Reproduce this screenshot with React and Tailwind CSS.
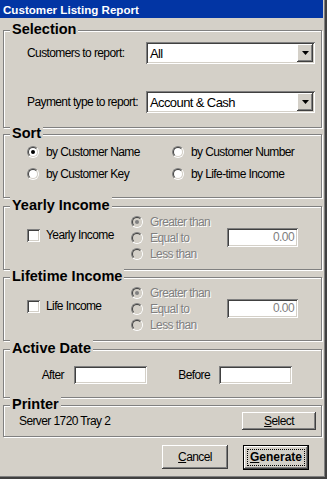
import React from 'react';

const ui = "font-['Liberation_Sans',Arial,sans-serif] text-[12px] tracking-[-0.6px] leading-[15px] text-black whitespace-nowrap";
const raised = "shadow-[inset_-1px_-1px_0_#404040,inset_1px_1px_0_#fff,inset_-2px_-2px_0_#808080,inset_2px_2px_0_#d4d0c8]";
const sunken = "shadow-[inset_1px_1px_0_#808080,inset_-1px_-1px_0_#fff,inset_2px_2px_0_#404040,inset_-2px_-2px_0_#d4d0c8]";
const disabledText = "text-[#808080] [text-shadow:1px_1px_0_#fff]";

function Group({ title, className, children }) {
  return (
    <div className={`relative w-[319px] border border-[#808080] shadow-[inset_1px_1px_0_#fff,1px_1px_0_#fff] ${className}`}>
      <span className="absolute left-[6px] top-[-10px] px-[2px] bg-[#d4d0c8] font-bold text-[14.5px] tracking-normal leading-[17px] text-black">
        {title}
      </span>
      {children}
    </div>
  );
}

function Radio({ checked, disabled }) {
  return (
    <span className="relative block w-[12px] h-[12px] shrink-0 rounded-full border border-t-[#808080] border-l-[#808080] border-b-white border-r-white">
      <span className={`absolute inset-0 rounded-full border border-t-[#404040] border-l-[#404040] border-b-[#d4d0c8] border-r-[#d4d0c8] ${disabled ? 'bg-[#d4d0c8]' : 'bg-white'}`} />
      {checked && (
        <span className={`absolute left-[3px] top-[3px] w-[4px] h-[4px] rounded-full ${disabled ? 'bg-[#808080]' : 'bg-black'}`} />
      )}
    </span>
  );
}

function RadioItem({ label, checked, disabled, className = '' }) {
  return (
    <div className={`flex items-center gap-[7px] ${className}`}>
      <Radio checked={checked} disabled={disabled} />
      <span className={disabled ? disabledText : ''}>{label}</span>
    </div>
  );
}

function Checkbox() {
  return <span className={`block w-[13px] h-[13px] shrink-0 bg-white ${sunken}`} />;
}

function Combo({ value }) {
  return (
    <div className={`flex w-[169px] h-[22px] p-[2px] bg-white ${sunken}`}>
      <span className="flex-1 flex items-center pl-[2px] text-[13px]">{value}</span>
      <span className={`w-[16px] h-[18px] flex items-center justify-center bg-[#d4d0c8] ${raised}`}>
        <svg width="7" height="4" viewBox="0 0 7 4"><path d="M0 0h7L3.5 4z" fill="#000" /></svg>
      </span>
    </div>
  );
}

function IncomeGroup({ title, label, className }) {
  return (
    <Group title={title} className={`h-[64px] ${className}`}>
      <div className="flex pl-[23px]">
        <div className="flex items-center gap-[6px] w-[104px] mt-[22px] h-[13px]">
          <Checkbox />
          <span>{label}</span>
        </div>
        <div className="w-[96px] pt-[7px]">
          <RadioItem className="h-[16px]" label="Greater than" checked disabled />
          <RadioItem className="h-[16px]" label="Equal to" disabled />
          <RadioItem className="h-[16px]" label="Less than" disabled />
        </div>
        <div className={`mt-[21px] w-[71px] h-[19px] bg-white flex items-center justify-end pr-[4px] text-[#808080] ${sunken}`}>
          0.00
        </div>
      </div>
    </Group>
  );
}

export default function App() {
  return (
    <div className={`relative w-[327px] h-[479px] bg-[#d4d0c8] overflow-hidden ${ui} shadow-[inset_-1px_-1px_0_#404040,inset_-2px_-2px_0_#404040,inset_-3px_-3px_0_#808080]`}>
      {/* title bar */}
      <div className="w-[323px] h-[18px] bg-[#0235a4] flex items-center pl-[3px] font-bold text-[11.6px] tracking-normal text-white">
        Customer Listing Report
      </div>

      <div className="pl-[3px]">
        {/* Selection */}
        <Group title="Selection" className="mt-[12px] h-[98px]">
          <div className="flex flex-col pt-[11px] pl-[23px]">
            <div className="flex items-center">
              <span className="w-[119px]">Customers to report:</span>
              <Combo value="All" />
            </div>
            <div className="flex items-center mt-[27px]">
              <span className="w-[119px]">Payment type to report:</span>
              <Combo value="Account & Cash" />
            </div>
          </div>
        </Group>

        {/* Sort */}
        <Group title="Sort" className="mt-[6px] h-[64px]">
          <div className="grid grid-cols-[145px_1fr] pt-[6px] pl-[23px]">
            <RadioItem className="h-[22px]" label="by Customer Name" checked />
            <RadioItem className="h-[22px]" label="by Customer Number" />
            <RadioItem className="h-[22px]" label="by Customer Key" />
            <RadioItem className="h-[22px]" label="by Life-time Income" />
          </div>
        </Group>

        <IncomeGroup title="Yearly Income" label="Yearly Income" className="mt-[8px]" />
        <IncomeGroup title="Lifetime Income" label="Life Income" className="mt-[7px]" />

        {/* Active Date */}
        <Group title="Active Date" className="mt-[8px] h-[49px]">
          <div className="flex items-center pt-[16px] pl-[26px]">
            <span className="w-[44px] text-right pr-[10px]">After</span>
            <span className={`w-[73px] h-[18px] bg-white ${sunken}`} />
            <span className="w-[72px] text-right pr-[9px]">Before</span>
            <span className={`w-[73px] h-[18px] bg-white ${sunken}`} />
          </div>
        </Group>

        {/* Printer */}
        <Group title="Printer" className="mt-[7px] h-[32px]">
          <div className="flex items-center justify-between pt-[6px] pl-[15px] pr-[5px]">
            <span>Server 1720 Tray 2</span>
            <button className={`w-[74px] h-[18px] bg-[#d4d0c8] flex items-center justify-center ${raised}`}>
              <span><span className="underline">S</span>elect</span>
            </button>
          </div>
        </Group>

        {/* buttons */}
        <div className="flex mt-[8px] pl-[159px]">
          <button className={`w-[66px] h-[24px] bg-[#d4d0c8] flex items-center justify-center ${raised}`}>
            <span><span className="underline">C</span>ancel</span>
          </button>
          <button className="relative ml-[15px] w-[66px] h-[25px] border border-black bg-[#d4d0c8]">
            <span className={`absolute inset-0 flex items-center justify-center ${raised}`}>
              <span className="font-bold text-[12px] tracking-normal">
                <span className="underline">G</span>enerate
              </span>
            </span>
            <span className="absolute inset-[3px] border border-dotted border-black" />
          </button>
        </div>
      </div>
    </div>
  );
}
